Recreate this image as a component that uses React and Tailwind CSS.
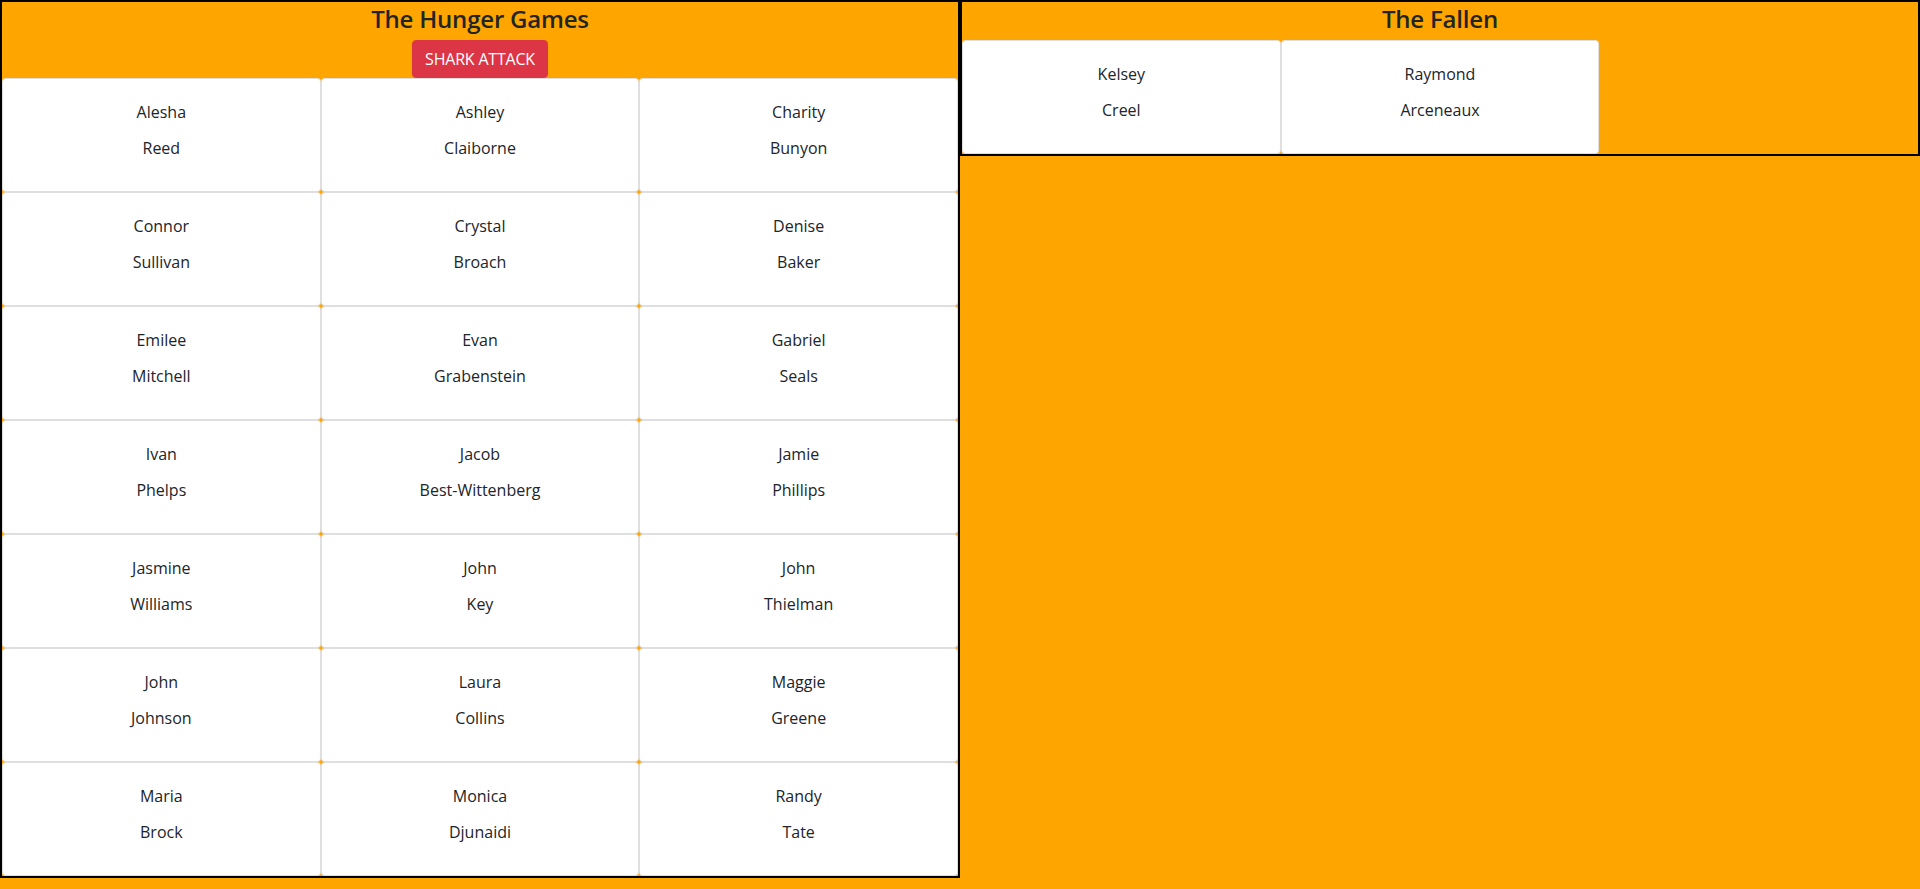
const tributes = [
  ['Alesha', 'Reed'], ['Ashley', 'Claiborne'], ['Charity', 'Bunyon'],
  ['Connor', 'Sullivan'], ['Crystal', 'Broach'], ['Denise', 'Baker'],
  ['Emilee', 'Mitchell'], ['Evan', 'Grabenstein'], ['Gabriel', 'Seals'],
  ['Ivan', 'Phelps'], ['Jacob', 'Best-Wittenberg'], ['Jamie', 'Phillips'],
  ['Jasmine', 'Williams'], ['John', 'Key'], ['John', 'Thielman'],
  ['John', 'Johnson'], ['Laura', 'Collins'], ['Maggie', 'Greene'],
  ['Maria', 'Brock'], ['Monica', 'Djunaidi'], ['Randy', 'Tate'],
]

const fallen = [['Kelsey', 'Creel'], ['Raymond', 'Arceneaux']]

function Card({ first, last }) {
  return (
    <div className="w-1/3 h-[114px] bg-white border border-black/[.125] rounded text-center text-base leading-6 text-[#212529] px-5 pt-[21px]">
      <p className="mb-3">{first}</p>
      <p className="mb-3">{last}</p>
    </div>
  )
}

export default function App() {
  return (
    <div className="min-h-screen w-full bg-[#ffa500] flex items-start" style={{ fontFamily: '"Open Sans", "Noto Sans", sans-serif' }}>
      {/* Living */}
      <div className="w-1/2 border-2 border-black flex flex-col items-center">
        <h4 className="text-2xl font-semibold leading-[1.2] pt-[3px] mb-[6px] tracking-[-0.2px] text-[#212529]">The Hunger Games</h4>
        <button className="bg-[#dc3545] text-white text-base leading-6 px-3 py-1.5 rounded border border-[#dc3545] tracking-[-0.2px]">SHARK ATTACK</button>
        <div className="w-full flex flex-wrap">
          {tributes.map(([f, l], i) => <Card key={i} first={f} last={l} />)}
        </div>
      </div>

      {/* Dead */}
      <div className="w-1/2 border-2 border-black flex flex-col items-center">
        <h4 className="text-2xl font-semibold leading-[1.2] pt-[3px] mb-[6px] tracking-[-0.2px] text-[#212529]">The Fallen</h4>
        <div className="w-full flex flex-wrap">
          {fallen.map(([f, l], i) => <Card key={i} first={f} last={l} />)}
        </div>
      </div>
    </div>
  )
}
